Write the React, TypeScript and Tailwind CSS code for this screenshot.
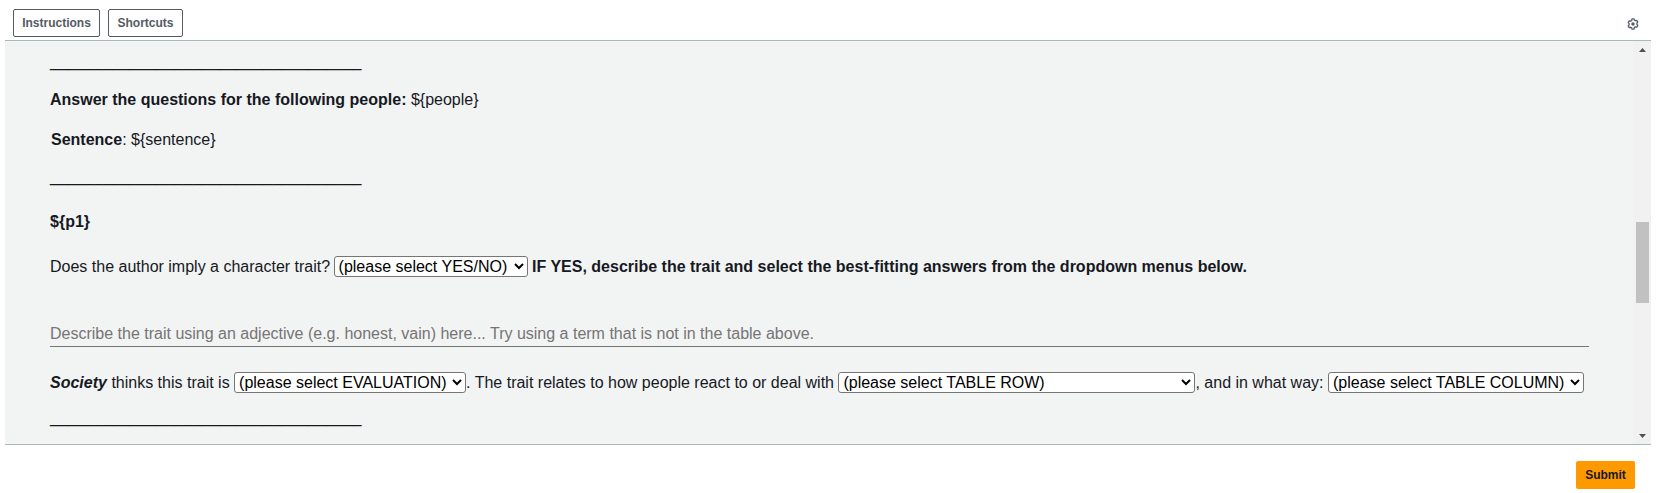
const Gear = () => (
  <svg width="12" height="12" viewBox="0 0 14 14" fill="none">
    <path
      d="M5.8 1h2.4l.4 1.5 1.3.7 1.5-.4 1.2 2-1.1 1.2v1.5l1.1 1.2-1.2 2-1.5-.4-1.3.7L8.2 13H5.8l-.4-1.5-1.3-.7-1.5.4-1.2-2 1.1-1.2V6.500L1.400 5.300l1.200-2 1.500.4 1.300-.7z"
      stroke="#545b64"
      strokeWidth="1.500"
      strokeLinejoin="round"
    />
    <circle cx="7" cy="7" r="2" fill="#545b64" />
  </svg>
);

const Rule = () => <p className="m-0 leading-[18px]">___________________________________</p>;

const selectClass =
  "h-[21px] bg-white border border-[#767676] rounded-[3px] text-[16px] text-black font-['Liberation_Sans',Arial,sans-serif] appearance-auto align-baseline";

const Dropdown = ({ label, width }: { label: string; width: string }) => (
  <select className={`${selectClass} ${width}`} defaultValue={label}>
    <option>{label}</option>
  </select>
);

export default function App() {
  return (
    <div className="h-[493px] w-full bg-white flex flex-col font-['Liberation_Sans',Arial,sans-serif] overflow-hidden">
      <header className="h-[41px] ml-[5px] mr-[6px] border-b border-[#a9b8b8] flex items-start justify-between">
        <div className="flex gap-2 mt-[9px] ml-2">
          <button className="h-[28px] w-[87px] border border-[#545b64] rounded-[2px] text-[12px] font-bold text-[#545b64]">
            Instructions
          </button>
          <button className="h-[28px] w-[75px] border border-[#545b64] rounded-[2px] text-[12px] font-bold text-[#545b64]">
            Shortcuts
          </button>
        </div>
        <div className="mt-[18px] mr-[12px]">
          <Gear />
        </div>
      </header>

      <main className="h-[404px] ml-[5px] mr-[6px] bg-[#f2f3f3] border-b border-[#a9b8b8] flex text-[16px] text-[#16191f]">
        <div className="flex-1 overflow-hidden pl-[45px] pr-[45px] pt-[12px]">
          <Rule />
          <p className="mt-[20px] leading-[18px]">
            <b>Answer the questions for the following people:</b> {"${people}"}
          </p>
          <p className="mt-[22px] leading-[18px]">
            <b className="ml-px">Sentence</b>: {"${sentence}"}
          </p>
          <div className="mt-[19px]">
            <Rule />
          </div>
          <p className="mt-[27px] leading-[18px]">
            <b>{"${p1}"}</b>
          </p>
          <p className="mt-[25px] leading-[21px]">
            Does the author imply a character trait? <Dropdown label="(please select YES/NO)" width="w-[194px] -ml-px" />{" "}
            <b>IF YES, describe the trait and select the best-fitting answers from the dropdown menus below.</b>
          </p>
          <input
            readOnly
            placeholder="Describe the trait using an adjective (e.g. honest, vain) here... Try using a term that is not in the table above."
            className="block w-full h-[26px] mt-[44px] bg-transparent border-b border-[#767676] outline-none text-[16px] placeholder:text-[#757575]"
          />
          <p className="mt-[25px] leading-[21px] whitespace-nowrap">
            <b>
              <i>Society</i>
            </b>{" "}
            thinks this trait is <Dropdown label="(please select EVALUATION)" width="w-[232px]" />. The trait relates to
            how people react to or deal with <Dropdown label="(please select TABLE ROW)" width="w-[357px]" />, and in
            what way: <Dropdown label="(please select TABLE COLUMN)" width="w-[256px]" />
          </p>
          <div className="mt-[16px]">
            <Rule />
          </div>
        </div>

        <div className="w-[17px] bg-[#f1f1f1] flex flex-col items-center relative shrink-0">
          <svg width="7" height="4" viewBox="0 0 9 5" className="mt-[7px]">
            <path d="M4.500 0L9 5H0z" fill="#505050" />
          </svg>
          <div className="absolute top-[181px] left-[2px] w-[13px] h-[81px] bg-[#c1c1c1]" />
          <svg width="7" height="4" viewBox="0 0 9 5" className="mt-auto mb-[6px]">
            <path d="M0 0h9L4.500 5z" fill="#505050" />
          </svg>
        </div>
      </main>

      <footer className="flex justify-end pr-[22px] pt-[16px]">
        <button className="w-[59px] h-[28px] bg-[#ff9900] rounded-[2px] text-[12px] font-bold text-[#16191f]">
          Submit
        </button>
      </footer>
    </div>
  );
}
